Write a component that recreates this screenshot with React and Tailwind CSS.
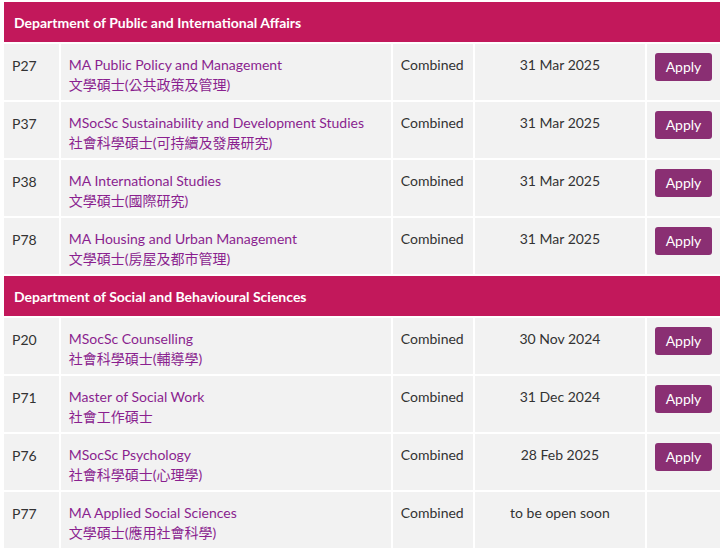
const groups = [
  { dept: "Department of Public and International Affairs", rows: [
    ["P27","MA Public Policy and Management","文學碩士(公共政策及管理)","31 Mar 2025",true],
    ["P37","MSocSc Sustainability and Development Studies","社會科學碩士(可持續及發展研究)","31 Mar 2025",true],
    ["P38","MA International Studies","文學碩士(國際研究)","31 Mar 2025",true],
    ["P78","MA Housing and Urban Management","文學碩士(房屋及都市管理)","31 Mar 2025",true],
  ]},
  { dept: "Department of Social and Behavioural Sciences", rows: [
    ["P20","MSocSc Counselling","社會科學碩士(輔導學)","30 Nov 2024",true],
    ["P71","Master of Social Work","社會工作碩士","31 Dec 2024",true],
    ["P76","MSocSc Psychology","社會科學碩士(心理學)","28 Feb 2025",true],
    ["P77","MA Applied Social Sciences","文學碩士(應用社會科學)","to be open soon",false],
  ]},
];
export default function App() {
  return (
    <div className="bg-white w-[724px] h-[548px] overflow-hidden pl-[2px]" style={{fontFamily:'Lato, "Noto Sans CJK TC", sans-serif'}}>
      <table className="border-separate border-spacing-[2px] w-[720px] text-[14px] text-[#333]">
        <tbody>
          {groups.map(g => [
            <tr key={g.dept}><td colSpan={5} className="bg-[#c2185b] text-white font-bold text-[14px] h-[40px] px-[10px]">{g.dept}</td></tr>,
            ...g.rows.map(r => (
              <tr key={r[0]} className="bg-[#f2f2f2] align-top">
                <td className="w-[55px] h-[56px] px-[8px] pt-[11px]">{r[0]}</td>
                <td className="w-[333px] px-[8px] pt-[11px] leading-[20px] text-[#8a1f8f]"><div>{r[1]}</div><div>{r[2]}</div></td>
                <td className="w-[80px] px-[8px] pt-[11px] leading-[20px]">{r[4]?"Combined":"Combined"}</td>
                <td className="w-[172px] text-center pt-[11px] leading-[20px]">{r[3]}</td>
                <td className="pt-[9px] px-[8px]">{r[4] && <span className="inline-block bg-[#8a2f73] text-white rounded-[3px] w-[57px] h-[28px] leading-[28px] text-center text-[14px]">Apply</span>}</td>
              </tr>
            ))
          ])}
        </tbody>
      </table>
    </div>
  );
}
